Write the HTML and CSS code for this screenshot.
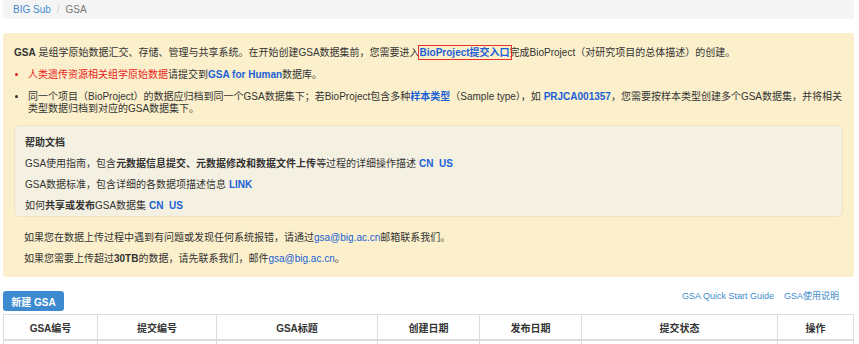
FILE: index.html
```html
<!DOCTYPE html>
<html lang="zh">
<head>
<meta charset="utf-8">
<title>GSA</title>
<link rel="stylesheet" href="styles.css">
</head>
<body>
<div class="page">
  <nav class="breadcrumb">
    <a class="crumb-link" href="#">BIG Sub</a><span class="sep">/</span><span class="crumb-active">GSA</span>
  </nav>

  <div class="alert">
    <p class="intro"><b>GSA</b> 是组学原始数据汇交、存储、管理与共享系统。在开始创建GSA数据集前，您需要进入<a class="lnk b boxed" href="#">BioProject提交入口</a>完成BioProject（对研究项目的总体描述）的创建。</p>
    <ul class="notes">
      <li class="red-item"><span class="red">人类遗传资源相关组学原始数据</span><span class="dark">请提交到<a class="lnk b" href="#">GSA for Human</a>数据库。</span></li>
      <li>同一个项目（BioProject）的数据应归档到同一个GSA数据集下；若BioProject包含多种<a class="lnk b" href="#">样本类型</a>（Sample type），如 <a class="lnk b" href="#">PRJCA001357</a>，您需要按样本类型创建多个GSA数据集，并将相关类型数据归档到对应的GSA数据集下。</li>
    </ul>

    <div class="help">
      <p class="help-title">帮助文档</p>
      <p>GSA使用指南，包含<b>元数据信息提交、元数据修改和数据文件上传</b>等过程的详细操作描述 <a class="lnk b" href="#">CN</a>&nbsp; <a class="lnk b" href="#">US</a></p>
      <p>GSA数据标准，包含详细的各数据项描述信息 <a class="lnk b" href="#">LINK</a></p>
      <p>如何<b>共享或发布</b>GSA数据集 <a class="lnk b" href="#">CN</a>&nbsp; <a class="lnk b" href="#">US</a></p>
    </div>

    <div class="contact">
      <p>如果您在数据上传过程中遇到有问题或发现任何系统报错，请通过<a class="lnk" href="#">gsa@big.ac.cn</a>邮箱联系我们。</p>
      <p>如果您需要上传超过<b>30TB</b>的数据，请先联系我们，邮件<a class="lnk" href="#">gsa@big.ac.cn</a>。</p>
    </div>
  </div>

  <div class="toolbar">
    <button class="btn-new" type="button">新建 GSA</button>
    <div class="guides">
      <a class="guide" href="#">GSA Quick Start Guide</a>
      <a class="guide" href="#">GSA使用说明</a>
    </div>
  </div>

  <table class="grid">
    <colgroup>
      <col class="c1"><col class="c2"><col class="c3"><col class="c4"><col class="c5"><col class="c6"><col class="c7">
    </colgroup>
    <thead>
      <tr>
        <th>GSA编号</th><th>提交编号</th><th>GSA标题</th><th>创建日期</th><th>发布日期</th><th>提交状态</th><th>操作</th>
      </tr>
    </thead>
    <tbody>
      <tr><td></td><td></td><td></td><td></td><td></td><td></td><td></td></tr>
    </tbody>
  </table>
</div>
</body>
</html>
```

FILE: styles.css
```css
html, body {
  margin: 0;
  padding: 0;
  background: #ffffff;
}

body {
  font-family: "Liberation Sans", "Noto Sans CJK SC", sans-serif;
  font-size: 10px;
  color: #333333;
}

a {
  text-decoration: none;
}

p {
  margin: 0;
}

.page {
  margin: 0 5px 0 3px;
}

/* breadcrumb */
.breadcrumb {
  height: 19px;
  line-height: 19px;
  background: #f5f5f5;
  border-radius: 0 0 3px 3px;
  padding-left: 10px;
}

.crumb-link {
  color: #428bca;
}

.sep {
  color: #cccccc;
  margin: 0 6px;
}

.crumb-active {
  color: #777777;
}

/* alert */
.alert {
  margin-top: 14px;
  background: #fbf0cb;
  border-radius: 3px;
  padding: 14px 11px 12px 11px;
  line-height: 12px;
}

.lnk {
  color: #1a5fd8;
}

.b {
  font-weight: bold;
}

.boxed {
  outline: 1.5px solid #e8332b;
  outline-offset: 1px;
}

.notes {
  margin: 10px 0 0 0;
  padding-left: 14px;
}

.notes li {
  margin-top: 10px;
}

.notes li:first-child {
  margin-top: 0;
}

.red-item {
  color: #e8231f;
}

.red {
  color: #e8231f;
}

.dark {
  color: #333333;
}

/* help box */
.help {
  margin-top: 10px;
  background: #f5f1e2;
  border: 1px solid #f6e0bd;
  border-radius: 5px;
  padding: 11px 10px 4px 10px;
}

.help p {
  margin-top: 9px;
}

.help p.help-title {
  margin-top: 0;
  font-weight: bold;
}

/* contact */
.contact {
  margin-top: 15px;
  padding-left: 10px;
}

.contact p + p {
  margin-top: 9px;
}

/* toolbar */
.toolbar {
  margin-top: 14px;
  display: flex;
  justify-content: space-between;
  align-items: flex-start;
}

.btn-new {
  height: 20px;
  width: 61px;
  padding: 0;
  border: 0;
  border-radius: 3px;
  background: #3d8ad0;
  color: #ffffff;
  font-family: "Liberation Sans", "Noto Sans CJK SC", sans-serif;
  font-size: 10px;
  font-weight: bold;
}

.guides {
  display: flex;
  gap: 10px;
  margin-right: 15px;
  line-height: 10px;
}

.guide {
  color: #428bca;
  font-size: 9px;
}

/* table */
.grid {
  margin-top: 3px;
  width: 850px;
  border-collapse: collapse;
  table-layout: fixed;
}

.c1 { width: 94px; }
.c2 { width: 119px; }
.c3 { width: 161px; }
.c4 { width: 102px; }
.c5 { width: 102px; }
.c6 { width: 196px; }
.c7 { width: 76px; }

.grid th {
  height: 24px;
  border: 1px solid #dddddd;
  border-bottom: 2px solid #dddddd;
  font-weight: bold;
  text-align: center;
  color: #333333;
  padding: 0;
}

.grid td {
  height: 24px;
  border: 1px solid #dddddd;
}
```
